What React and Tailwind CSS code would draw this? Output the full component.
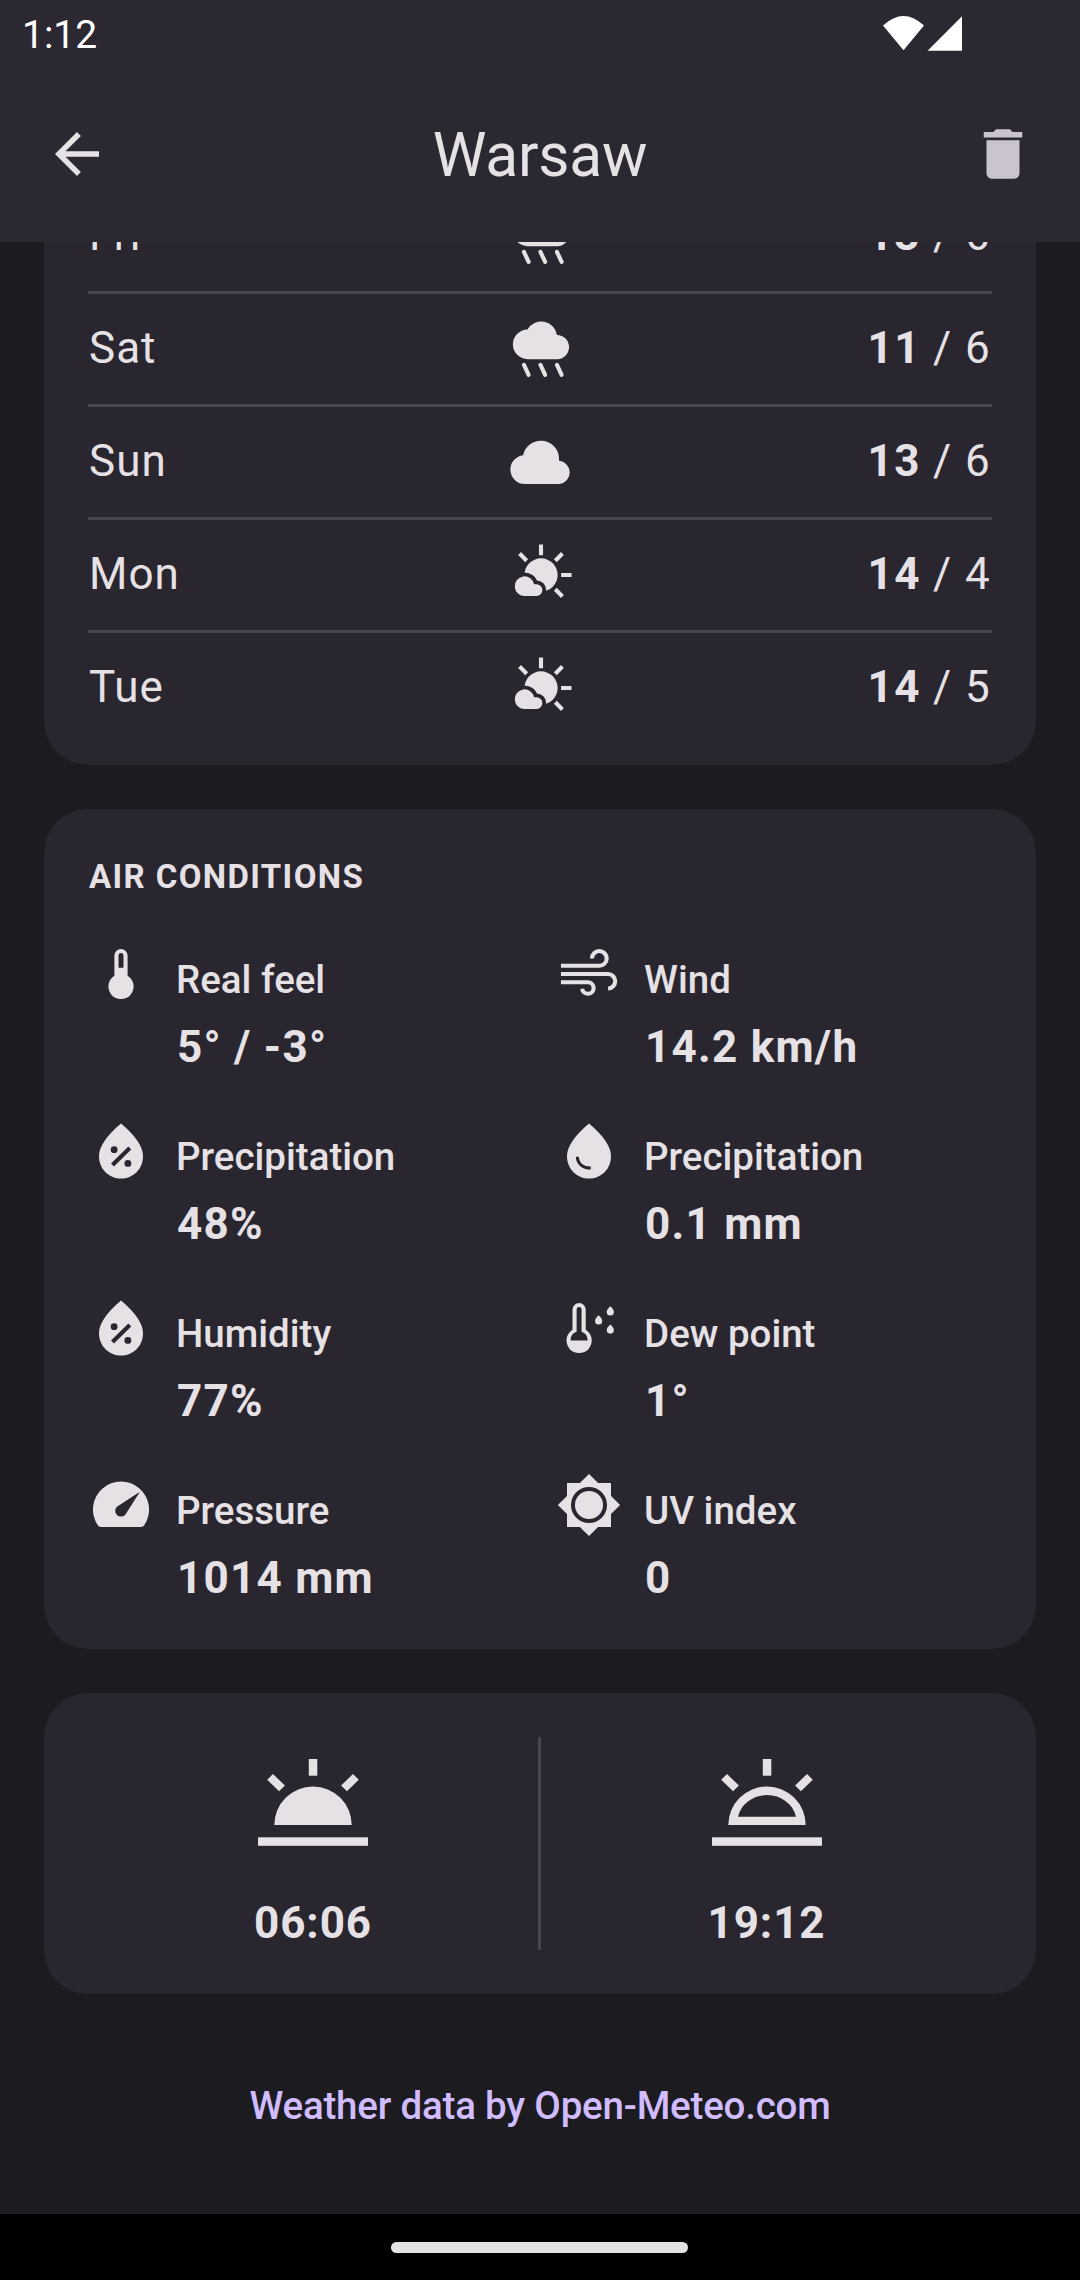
import React from "react";
import { MdArrowBack, MdDelete } from "react-icons/md";

const Svg = ({ children, className = "size-[66px]" }) => (
  <svg viewBox="0 0 24 24" fill="currentColor" className={`${className} shrink-0`}>
    {children}
  </svg>
);

const RainIcon = () => (
  <Svg>
    <path d="M7.3 15.7a5.4 5.4 0 0 1-.24-10.8A5.8 5.8 0 0 1 17.8 6.9a4.4 4.4 0 0 1 0 8.8z" />
    <path
      d="M5.8 17.8l1.7 3.6M11.8 17.8l1.7 3.6M17.8 17.8l1.7 3.6"
      fill="none"
      stroke="currentColor"
      strokeWidth="1.5"
      strokeLinecap="round"
    />
  </Svg>
);

const CloudIcon = () => (
  <Svg>
    <path d="M6.2 20a5.27 5.27 0 0 1-.7-10.5A6.6 6.6 0 0 1 18.55 10.6v.95a4.25 4.25 0 0 1 .2 8.45z" />
  </Svg>
);

const PartlyIcon = () => (
  <Svg>
    <circle cx="12" cy="12" r="6.05" />
    <path
      d="M12 .9v3.9M19.3 12h3.8M17.2 6.8l2.6-2.6M4.2 4.2l2.6 2.6M17.2 17.2l2.6 2.6"
      stroke="currentColor"
      strokeWidth="1.5"
    />
    <path
      className="stroke-[#29262f]"
      strokeWidth="2.8"
      paintOrder="stroke"
      d="M6.1 19.6a3.55 3.55 0 1 1 3.4-4.2h.9a2.1 2.1 0 0 1 0 4.2z"
    />
  </Svg>
);

const ThermoIcon = () => (
  <Svg>
    <path
      fillRule="evenodd"
      d="M12 2.9a2.4 2.4 0 0 1 2.4 2.4v7.3a4.6 4.6 0 1 1-4.8 0V5.3A2.4 2.4 0 0 1 12 2.9zM12 4.4a.9.9 0 0 0-.9.9v4.4h1.8V5.3a.9.9 0 0 0-.9-.9z"
    />
  </Svg>
);

const WindIcon = () => (
  <Svg>
    <path
      fill="none"
      stroke="currentColor"
      strokeWidth="1.5"
      d="M1.8 9H15.75a2.68 2.68 0 1 0-2.68-2.68M1.8 12H18.85a2.6 2.6 0 0 1 .1 5.25M1.8 15H11.6a2.1 2.1 0 1 1-2.1 2.35"
    />
  </Svg>
);

const DROP = "M12 2c-5.33 4.55-8 8.48-8 11.8 0 4.98 3.8 8.2 8 8.2s8-3.22 8-8.2c0-3.32-2.67-7.25-8-11.8z";

const DropIcon = () => (
  <Svg>
    <path d={DROP} />
    <path
      d="M7.75 14.1c.1 2.5 2 4.15 4.9 4.1"
      fill="none"
      className="stroke-[#29262f]"
      strokeWidth="1.1"
    />
  </Svg>
);

const PercentDropIcon = () => (
  <Svg>
    <path d={DROP} />
    <g className="fill-[#29262f] stroke-[#29262f]">
      <circle cx="9.5" cy="11.5" r="1.25" stroke="none" />
      <circle cx="14.5" cy="16.5" r="1.25" stroke="none" />
      <path d="M8.9 17.1l6.3-6.2" strokeWidth="1.5" />
    </g>
  </Svg>
);

const DewIcon = () => (
  <Svg>
    <path
      fillRule="evenodd"
      d="M8.4 2.9a2.4 2.4 0 0 1 2.4 2.4v7.3a4.6 4.6 0 1 1-4.8 0V5.3a2.4 2.4 0 0 1 2.4-2.4zM8.4 4.4a.9.9 0 0 0-.9.9v8.1a3.2 3.2 0 0 0-2.2 3.1h6.2a3.2 3.2 0 0 0-2.2-3.1V5.3a.9.9 0 0 0-.9-.9z"
    />
    <path d="M19.75 4.1c.85.8 1.3 1.45 1.3 2.05a1.3 1.3 0 0 1-2.6 0c0-.6.45-1.25 1.3-2.05z" />
    <path d="M15.5 7.4c.85.8 1.3 1.45 1.3 2.05a1.3 1.3 0 0 1-2.6 0c0-.6.45-1.25 1.3-2.05z" />
    <path d="M19.75 10.7c.85.8 1.3 1.45 1.3 2.05a1.3 1.3 0 0 1-2.6 0c0-.6.45-1.25 1.3-2.05z" />
  </Svg>
);

const GaugeIcon = () => (
  <Svg>
    <path
      fillRule="evenodd"
      d="M4.7 20q-.8 0-1.2-.7A10.2 10.2 0 1 1 20.5 19.3q-.4.7-1.2.7zM10.5 12.6a2.1 2.1 0 0 0 3 3L18.9 7.2z"
    />
  </Svg>
);

const UvIcon = () => (
  <Svg>
    <path
      fillRule="evenodd"
      d="M20 8.69V4h-4.69L12 .69 8.69 4H4v4.69L.69 12 4 15.31V20h4.69L12 23.31 15.31 20H20v-4.69L23.31 12 20 8.69zM12 18.55a6.55 6.55 0 1 1 0-13.1 6.55 6.55 0 0 1 0 13.1z"
    />
    <circle cx="12" cy="12" r="5.1" />
  </Svg>
);

const HorizonIcon = ({ outline }) => (
  <svg viewBox="0 0 110 110" fill="currentColor" className="size-[110px] shrink-0">
    <rect x="0" y="78.3" width="110" height="8.5" />
    <rect x="50.8" y="0" width="8.5" height="16.7" />
    <path d="M15 15l-5.8 5.8 11.9 11.4 5.8-5.6zM95 15l5.8 5.8-11.9 11.4-5.8-5.6z" />
    <path
      fillRule="evenodd"
      d={
        outline
          ? "M16.3 66a38.7 38.5 0 0 1 77.4 0zM26 57.7h58a29.6 27 0 0 0-58 0z"
          : "M16.3 66a38.7 38.5 0 0 1 77.4 0z"
      }
    />
  </svg>
);

const days = [
  ["Fri", RainIcon, 13, 6],
  ["Sat", RainIcon, 11, 6],
  ["Sun", CloudIcon, 13, 6],
  ["Mon", PartlyIcon, 14, 4],
  ["Tue", PartlyIcon, 14, 5],
];

const conditions = [
  [ThermoIcon, "Real feel", "5° / -3°"],
  [WindIcon, "Wind", "14.2 km/h"],
  [PercentDropIcon, "Precipitation", "48%"],
  [DropIcon, "Precipitation", "0.1 mm"],
  [PercentDropIcon, "Humidity", "77%"],
  [DewIcon, "Dew point", "1°"],
  [GaugeIcon, "Pressure", "1014 mm"],
  [UvIcon, "UV index", "0"],
];

export default function App() {
  return (
    <div className="flex h-[2280px] w-[1080px] flex-col overflow-hidden bg-[#1c1b1f] font-['Roboto',sans-serif] text-[#e6e1e5]">
      <header className="flex h-[242px] shrink-0 flex-col bg-[#2b2831]">
        <div className="flex h-[66px] items-center justify-between pr-[118px] pl-[22px] text-white">
          <span className="pt-[3px] text-[39px] leading-[70px]">1:12</span>
          <svg viewBox="0 0 79 35" fill="currentColor" className="h-[35px] w-[79px]">
            <path d="M0 9.6Q20.5-9.6 41 9.6L20.5 34.3z" />
            <path d="M79 .3v34.4H44.6z" />
          </svg>
        </div>
        <div className="flex h-[176px] items-center justify-between px-[44px]">
          <MdArrowBack className="size-[66px]" />
          <h1 className="pt-[5px] text-[60.5px] leading-none tracking-[-0.2px]">Warsaw</h1>
          <MdDelete className="size-[66px] text-[#cac4d0]" />
        </div>
      </header>

      <main className="flex grow flex-col px-[44px]">
        <section className="flex h-[523px] flex-col justify-end overflow-hidden rounded-b-[44px] bg-[#29262f] px-[44px] pb-[22px]">
          {days.map(([day, Icon, high, low], i) => (
            <div
              key={day}
              className={`grid shrink-0 grid-cols-3 items-center text-[44px] leading-[52px] tracking-[1.375px] ${
                i ? "h-[113px] border-t-3 border-[#49454f]" : "h-[110px]"
              }`}
            >
              <span className="pb-[2px] pl-px tracking-[1px]">{day}</span>
              <span className="flex justify-center pl-[2px]">
                <Icon />
              </span>
              <span className="pr-px pb-[2px] text-right">
                <b className="font-bold">{high}</b> / {low}
              </span>
            </div>
          ))}
        </section>

        <section className="mt-[44px] h-[840px] rounded-[44px] bg-[#29262f] p-[44px]">
          <h2 className="pl-px text-[33px] leading-[47px] font-bold tracking-[1.375px]">AIR CONDITIONS</h2>
          <div className="mt-[41px] grid grid-cols-2 gap-x-[32px] gap-y-[44px]">
            {conditions.map(([Icon, label, value], i) => (
              <div key={i} className="flex h-[133px] gap-[22px]">
                <Icon />
                <div className="flex flex-col">
                  <span className="h-[80px] text-[38.5px] leading-[78px] font-medium">{label}</span>
                  <span className="pl-px text-[44px] leading-[53px] font-bold tracking-[1.25px]">{value}</span>
                </div>
              </div>
            ))}
          </div>
        </section>

        <section className="mt-[44px] flex h-[301px] rounded-[44px] bg-[#29262f] p-[44px]">
          <div className="flex w-[450px] flex-col items-center justify-between pt-[22px]">
            <HorizonIcon />
            <span className="text-[44px] leading-[53px] font-bold tracking-[0.9px]">06:06</span>
          </div>
          <div className="w-[3px] bg-[#49454f]" />
          <div className="flex flex-1 flex-col items-center justify-between pt-[22px]">
            <HorizonIcon outline />
            <span className="text-[44px] leading-[53px] font-bold tracking-[0.9px]">19:12</span>
          </div>
        </section>

        <a className="mt-[84px] text-center text-[38.5px] leading-[55px] font-medium tracking-[-0.2px] text-[#d0bcff]">
          Weather data by Open-Meteo.com
        </a>
      </main>

      <nav className="flex h-[66px] shrink-0 items-center justify-center bg-black pr-px">
        <div className="h-[11px] w-[297px] rounded-full bg-[#e3e3e3]" />
      </nav>
    </div>
  );
}
